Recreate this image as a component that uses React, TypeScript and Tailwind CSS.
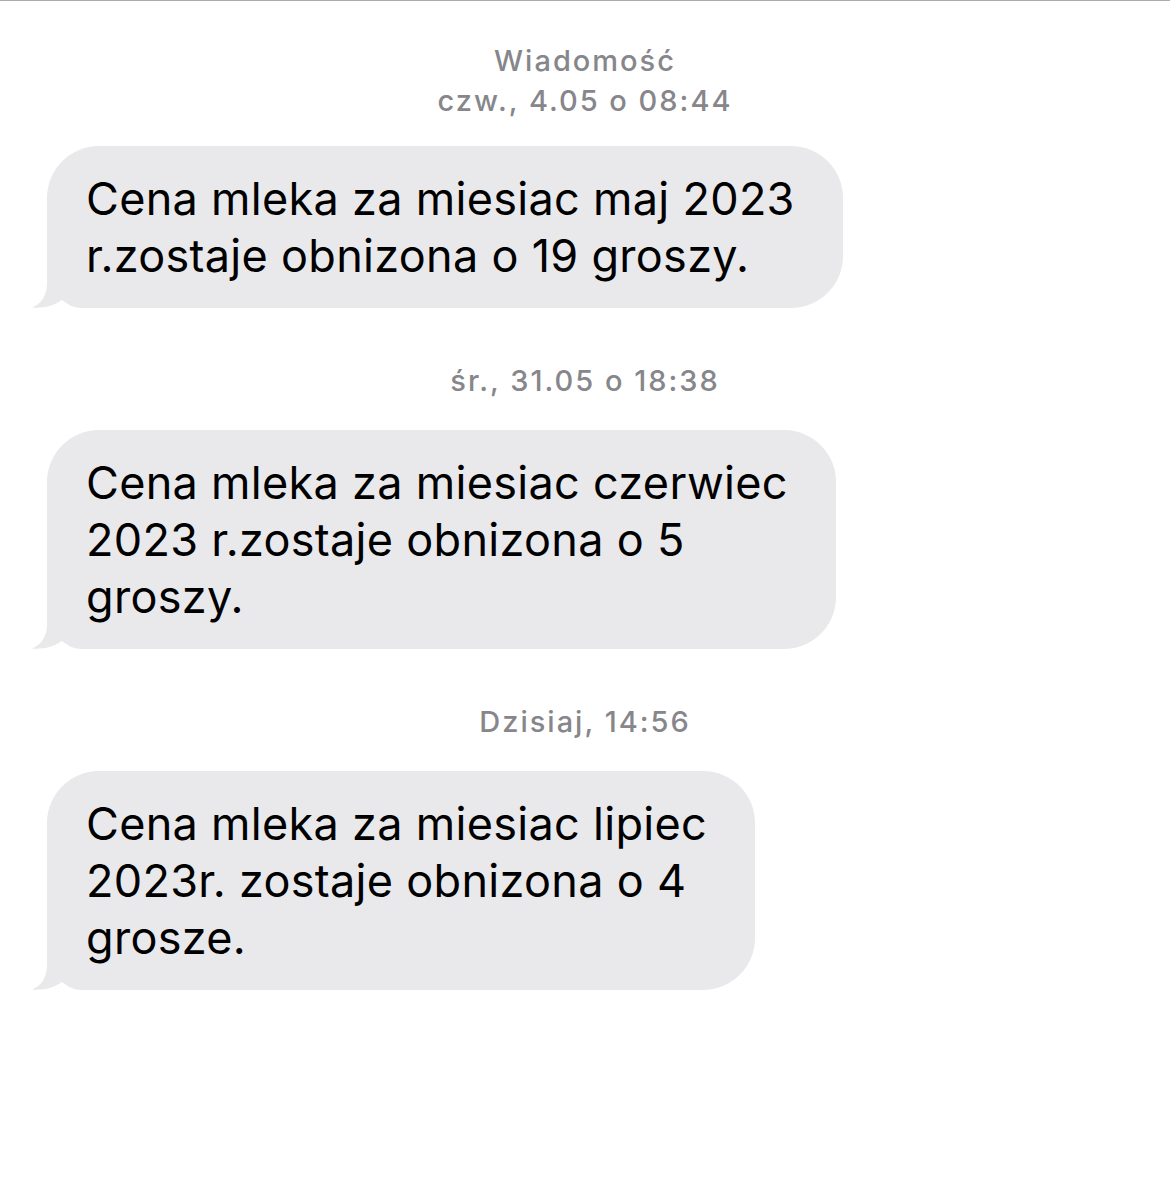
const messages = [
  {
    time: 'śr., 31.05 o 18:38',
    lines: ['Cena mleka za miesiac czerwiec', '2023 r.zostaje obnizona o 5', 'groszy.'],
  },
  {
    time: 'Dzisiaj, 14:56',
    lines: ['Cena mleka za miesiac lipiec', '2023r. zostaje obnizona o 4', 'grosze.'],
  },
];

function Tail() {
  return (
    <svg
      className="absolute -left-[15px] bottom-0 w-[70px] h-[60px]"
      viewBox="0 0 70 60"
      fill="#e9e9eb"
    >
      <path d="M15 0 L15 35 C15 48 9 56 0 59.5 C10 60.5 22 58 30 52 C36 57 42 60 50 60 L70 60 L70 0 Z" />
    </svg>
  );
}

function Bubble({ lines }: { lines: string[] }) {
  return (
    <div className="flex pl-[47px]">
      <div className="relative bg-[#e9e9eb] rounded-[52px] pl-[39px] pr-[48px] py-6 text-[45px] leading-[57px] text-black tracking-[0.3px]">
        <Tail />
        <p className="relative whitespace-nowrap">
          {lines.map((line, i) => (
            <span key={i} className="block">
              {line}
            </span>
          ))}
        </p>
      </div>
    </div>
  );
}

function Stamp({ children }: { children: React.ReactNode }) {
  return (
    <p className="text-center text-[29px] leading-[40px] font-medium tracking-[2px] text-[#86868b]">
      {children}
    </p>
  );
}

export default function App() {
  return (
    <div
      className="w-[1170px] h-[1196px] bg-white overflow-hidden"
      style={{ fontFamily: 'Inter, "Noto Sans", sans-serif' }}
    >
      <div className="h-px bg-[#ababab]" />

      <div className="pt-[40px] mb-[25px]">
        <Stamp>Wiadomość</Stamp>
        <Stamp>czw., 4.05 o 08:44</Stamp>
      </div>

      <Bubble lines={['Cena mleka za miesiac maj 2023', 'r.zostaje obnizona o 19 groszy.']} />

      {messages.map((m) => (
        <div key={m.time}>
          <div className="mt-[53px] mb-[29px]">
            <Stamp>{m.time}</Stamp>
          </div>
          <Bubble lines={m.lines} />
        </div>
      ))}
    </div>
  );
}
